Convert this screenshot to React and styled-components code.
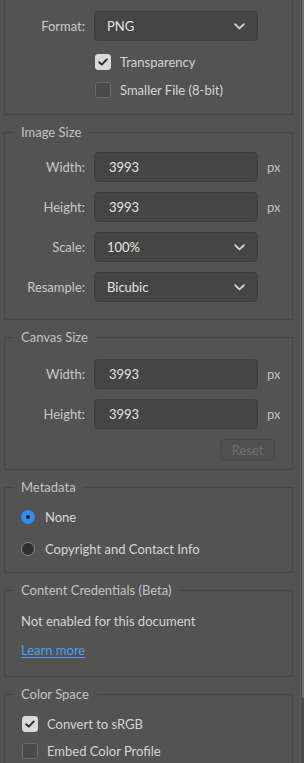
import React from "react";
import styled, { createGlobalStyle } from "styled-components";

const Global = createGlobalStyle`
  html, body { margin: 0; padding: 0; background: #535353; }
  body { font-family: Lato, "Open Sans", "Liberation Sans", sans-serif; font-size: 13px; color: #cfcfcf; }
  * { box-sizing: border-box; }
`;

const Page = styled.div`
  display: flex;
  width: 304px;
  height: 763px;
  overflow: hidden;
  background: #535353;
`;

const Panel = styled.div`
  flex: 1;
  display: flex;
  flex-direction: column;
  gap: 9px;
  padding-left: 4px;
  padding-right: 7px;
`;

const Track = styled.div`
  width: 4px;
  display: flex;
  flex-direction: column;
  border-left: 1px solid #5c5c5c;
  background: #4a4a4a;
`;

const Thumb = styled.div`
  height: 698px;
  width: 2px;
  margin-left: 1px;
  background: #707070;
`;

const TopGroup = styled.div`
  border: 1px solid #474747;
  border-top: none;
  padding: 11px 0 16px 0;
`;

const Group = styled.fieldset`
  margin: 0;
  border: 1px solid #474747;
  padding: ${(p) => p.$pad || "0"};
  min-width: 0;
`;

const Legend = styled.legend`
  margin-left: 8px;
  padding: 0 8px;
  line-height: 16px;
  font-size: 13px;
  color: #c2c2c2;
`;

const FormGrid = styled.div`
  display: grid;
  grid-template-columns: 80px 164px auto;
  column-gap: 9px;
  row-gap: 10px;
  align-items: center;
`;

const Label = styled.span`
  text-align: right;
  color: #c8c8c8;
  line-height: 16px;
`;

const Unit = styled.span`
  color: #c0c0c0;
  line-height: 16px;
`;

const Field = styled.div`
  height: 30px;
  display: flex;
  align-items: center;
  justify-content: space-between;
  padding: 0 12px 0 ${(p) => (p.$input ? "14px" : "12px")};
  background: #454545;
  border: 1px solid #3d3d3d;
  border-radius: 4px;
  color: #e4e4e4;
  font-size: 13px;
`;

const Chevron = () => (
  <svg width="11" height="7" viewBox="0 0 11 7" fill="none">
    <path d="M1.2 1.2 L5.5 5.4 L9.8 1.2" stroke="#cfcfcf" strokeWidth="1.9" strokeLinecap="round" strokeLinejoin="round" />
  </svg>
);

const Select = ({ value }) => (
  <Field>
    <span>{value}</span>
    <Chevron />
  </Field>
);

const CheckList = styled.div`
  display: flex;
  flex-direction: column;
  gap: ${(p) => p.$gap || "12px"};
  padding-left: ${(p) => p.$indent};
  margin-top: ${(p) => p.$top || "0"};
`;

const CheckRow = styled.label`
  display: flex;
  align-items: center;
  gap: 9px;
  height: 16px;
  color: #d4d4d4;
`;

const Box = styled.span`
  width: 16px;
  height: 16px;
  border-radius: 3px;
  display: flex;
  align-items: center;
  justify-content: center;
  background: ${(p) => (p.$on ? "#dadada" : "#4a4a4a")};
  border: 1px solid ${(p) => (p.$on ? "#dadada" : "#6a6a6a")};
`;

const Check = ({ on, children }) => (
  <CheckRow>
    <Box $on={on}>
      {on && (
        <svg width="10" height="8" viewBox="0 0 10 8" fill="none">
          <path d="M1.2 4.2 L3.8 6.6 L8.8 1.4" stroke="#2b2b2b" strokeWidth="1.9" strokeLinecap="round" strokeLinejoin="round" />
        </svg>
      )}
    </Box>
    <span>{children}</span>
  </CheckRow>
);

const RadioList = styled.div`
  display: flex;
  flex-direction: column;
  gap: 8px;
  padding-left: 16px;
`;

const RadioRow = styled.label`
  display: flex;
  align-items: center;
  gap: 10px;
  height: 24px;
  color: #d6d6d6;
`;

const Dot = styled.span`
  width: 14px;
  height: 14px;
  border-radius: 50%;
  display: flex;
  align-items: center;
  justify-content: center;
  background: ${(p) => (p.$on ? "#2f8ef0" : "#2e2e2e")};
  border: ${(p) => (p.$on ? "none" : "1.5px solid #8a8a8a")};
  &::after {
    content: "";
    display: ${(p) => (p.$on ? "block" : "none")};
    width: 4px;
    height: 4px;
    border-radius: 50%;
    background: #1d1d1d;
  }
`;

const ButtonRow = styled.div`
  display: flex;
  justify-content: flex-end;
  padding-right: 17px;
  margin-top: 10px;
`;

const ResetButton = styled.button`
  width: 55px;
  height: 22px;
  border: 1px solid #494949;
  border-radius: 4px;
  background: #505050;
  color: #6f6f6f;
  font-family: inherit;
  font-size: 13px;
  padding: 0;
`;

const Note = styled.div`
  padding-left: 16px;
  line-height: 16px;
  color: #d4d4d4;
`;

const Link = styled.a`
  display: block;
  margin: 13px 0 0 16px;
  line-height: 16px;
  color: #4b9ef2;
  text-decoration: underline;
  text-underline-offset: 2px;
  width: fit-content;
`;

export default function App() {
  return (
    <>
      <Global />
      <Page>
        <Panel>
          <TopGroup>
            <FormGrid>
              <Label>Format:</Label>
              <Select value="PNG" />
              <span />
            </FormGrid>
            <CheckList $indent="90px" $top="13px">
              <Check on>Transparency</Check>
              <Check>Smaller File (8-bit)</Check>
            </CheckList>
          </TopGroup>

          <Group $pad="12px 0 17px 0">
            <Legend>Image Size</Legend>
            <FormGrid>
              <Label>Width:</Label>
              <Field $input>3993</Field>
              <Unit>px</Unit>
              <Label>Height:</Label>
              <Field $input>3993</Field>
              <Unit>px</Unit>
              <Label>Scale:</Label>
              <Select value="100%" />
              <span />
              <Label>Resample:</Label>
              <Select value="Bicubic" />
              <span />
            </FormGrid>
          </Group>

          <Group $pad="14px 0 8px 0">
            <Legend>Canvas Size</Legend>
            <FormGrid>
              <Label>Width:</Label>
              <Field $input>3993</Field>
              <Unit>px</Unit>
              <Label>Height:</Label>
              <Field $input>3993</Field>
              <Unit>px</Unit>
            </FormGrid>
            <ButtonRow>
              <ResetButton disabled>Reset</ResetButton>
            </ButtonRow>
          </Group>

          <Group $pad="10px 0 11px 0">
            <Legend>Metadata</Legend>
            <RadioList>
              <RadioRow>
                <Dot $on />
                <span>None</span>
              </RadioRow>
              <RadioRow>
                <Dot />
                <span>Copyright and Contact Info</span>
              </RadioRow>
            </RadioList>
          </Group>

          <Group $pad="15px 0 18px 0">
            <Legend>Content Credentials (Beta)</Legend>
            <Note>Not enabled for this document</Note>
            <Link href="#">Learn more</Link>
          </Group>

          <Group $pad="14px 0 20px 0">
            <Legend>Color Space</Legend>
            <CheckList $indent="17px" $gap="11px">
              <Check on>Convert to sRGB</Check>
              <Check>Embed Color Profile</Check>
            </CheckList>
          </Group>
        </Panel>
        <Track>
          <Thumb />
        </Track>
      </Page>
    </>
  );
}
